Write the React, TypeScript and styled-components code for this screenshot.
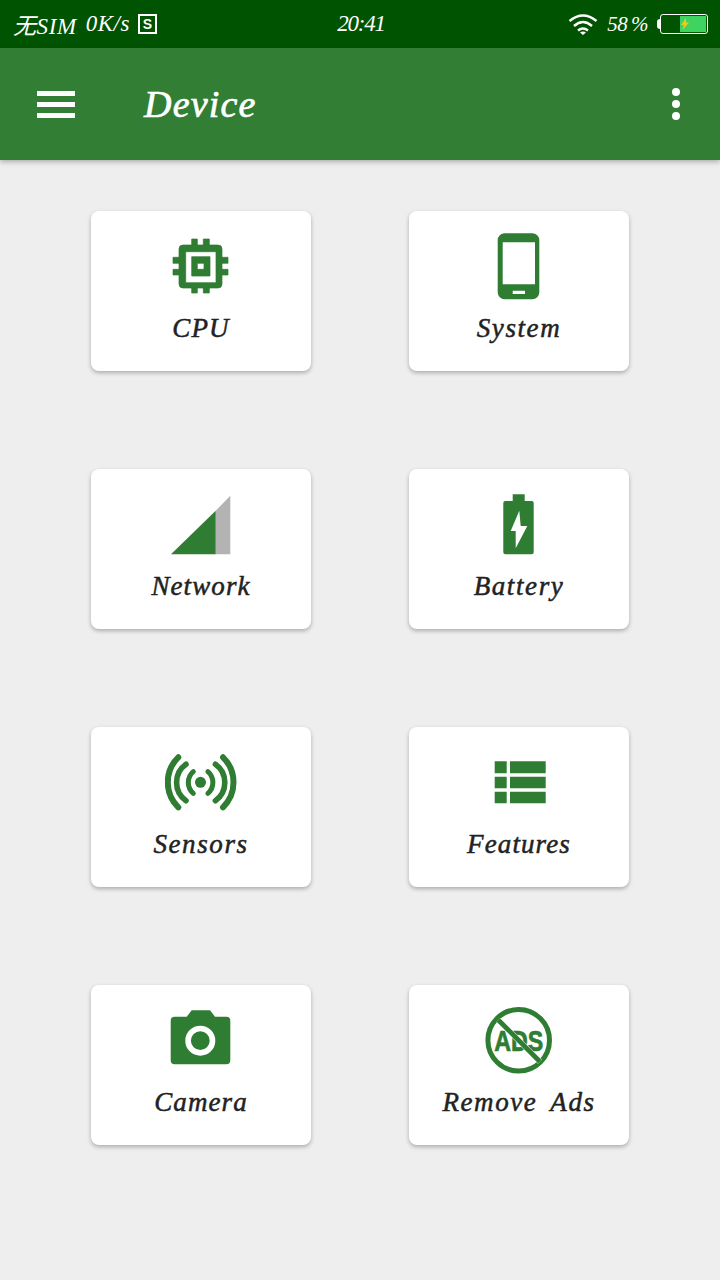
import * as React from 'react';
import styled, { createGlobalStyle } from 'styled-components';

const GREEN = '#2e7d32';
const SCRIPT = `"Liberation Serif", "Noto Sans CJK SC", serif`;

const GlobalStyle = createGlobalStyle`
  html, body {
    margin: 0;
    padding: 0;
    background: #eeeeee;
  }
`;

const Page = styled.div`
  width: 720px;
  height: 1280px;
  overflow: hidden;
  background: #eeeeee;
  font-family: ${SCRIPT};
`;

const StatusBar = styled.div`
  display: grid;
  grid-template-columns: 1fr auto 1fr;
  align-items: center;
  height: 48px;
  padding: 0 12px 0 13px;
  background: #005300;
  color: #fff;
  font-size: 23px;
  font-style: italic;
`;

const StatusLeft = styled.div`
  display: flex;
  align-items: center;
`;

const StatusRight = styled.div`
  display: flex;
  align-items: center;
  justify-content: flex-end;
`;

const Speed = styled.span`
  margin-left: 9px;
  letter-spacing: 0.5px;
`;

const Carrier = styled.span`
  letter-spacing: 0.6px;
`;

const SimBadge = styled.span`
  display: flex;
  align-items: center;
  justify-content: center;
  box-sizing: border-box;
  width: 19px;
  height: 20px;
  margin-left: 8px;
  border: 2px solid #fff;
  font: bold 14px "Liberation Sans", sans-serif;
`;

const Clock = styled.span`
  margin-left: 1px;
  letter-spacing: -1.2px;
`;

const Percent = styled.span`
  margin: 0 9px;
  font-size: 21px;
  letter-spacing: -0.5px;
  word-spacing: -1px;
`;

const BatteryCap = styled.span`
  width: 3px;
  height: 10px;
  border-radius: 3px 0 0 3px;
  background: #fff;
`;

const BatteryShell = styled.span`
  display: flex;
  justify-content: flex-end;
  box-sizing: border-box;
  width: 48px;
  height: 20px;
  padding: 1px;
  border: 1.5px solid #fff;
  border-radius: 3px;
`;

const BatteryFill = styled.span`
  display: flex;
  align-items: center;
  height: 100%;
  background: #3ed45f;
`;

const AppBar = styled.header`
  position: relative;
  display: flex;
  align-items: center;
  height: 112px;
  padding: 0 40px 0 37px;
  background: #317e34;
  box-shadow: 0 2px 5px rgba(0, 0, 0, 0.28);
`;

const MenuButton = styled.div`
  display: flex;
  flex-direction: column;
  gap: 6px;
  width: 38px;
`;

const MenuBar = styled.span`
  height: 5px;
  background: #fff;
`;

const Title = styled.h1`
  flex: 1;
  margin: 0 0 0 69px;
  color: #fff;
  font-size: 38px;
  font-style: italic;
  font-weight: 400;
  letter-spacing: 1.2px;
  -webkit-text-stroke: 0.7px #fff;
`;

const MoreButton = styled.div`
  display: flex;
  flex-direction: column;
  gap: 4px;
`;

const MoreDot = styled.span`
  width: 8px;
  height: 8px;
  border-radius: 50%;
  background: #fff;
`;

const Grid = styled.main`
  display: grid;
  grid-template-columns: 220px 220px;
  gap: 98px;
  justify-content: center;
  padding-top: 51px;
`;

const Card = styled.div`
  display: flex;
  flex-direction: column;
  align-items: center;
  height: 160px;
  padding-top: 19px;
  box-sizing: border-box;
  border-radius: 8px;
  background: #fff;
  box-shadow: 0 2px 4px rgba(0, 0, 0, 0.28);
`;

const Glyph = styled.svg.attrs({ viewBox: '0 0 72 72' })`
  display: block;
  width: 72px;
  height: 72px;
  fill: ${GREEN};
`;

const Label = styled.span<{ $wide?: boolean }>`
  margin-top: 8px;
  color: #222;
  font-size: 27px;
  font-style: italic;
  line-height: 36px;
  letter-spacing: ${p => (p.$wide ? '1.6px' : '1.1px')};
  word-spacing: 5px;
  white-space: nowrap;
  -webkit-text-stroke: 0.5px #222;
`;

const CpuIcon = () => (
  <Glyph stroke={GREEN} strokeWidth="0.7">
    <path d="M26.700 9h5.600v6h-5.600zM38.300 9h6v6h-6zM26.700 58h5.600v5h-5.600zM38.300 58h6v5h-6zM8 27.300h6v6H8zM8 39.300h6V45H8zM57 27.300h6v6h-6zM57 39.300h6V45h-6z" />
    <path
      fillRule="evenodd"
      d="M18 15h35a4 4 0 0 1 4 4v35a4 4 0 0 1-4 4H18a4 4 0 0 1-4-4V19a4 4 0 0 1 4-4zM20.700 21.700v31H51v-31zM26.700 26.700H45V46H26.700zM32.300 33.300v6H39v-6z"
    />
  </Glyph>
);

const PhoneIcon = () => (
  <Glyph>
    <path
      fillRule="evenodd"
      d="M21.700 3.300h27.600a7 7 0 0 1 7 7v52a7 7 0 0 1-7 7H21.700a7 7 0 0 1-7-7v-52a7 7 0 0 1 7-7zM19.700 12.300v42H52v-42zM29.700 60.700V64H42v-3.300z"
    />
  </Glyph>
);

const SignalIcon = () => (
  <Glyph>
    <path fill="#b3b3b3" d="M50.700 22.700 65.300 7.700v58.600H50.700z" />
    <path d="M6 66.300 50.700 22.700v43.600z" />
  </Glyph>
);

const BatteryIcon = () => (
  <Glyph>
    <path
      fillRule="evenodd"
      d="M29.700 6.300h12V13h7a2 2 0 0 1 2 2v49.300a2 2 0 0 1-2 2H22.300a2 2 0 0 1-2-2V15a2 2 0 0 1 2-2h7.400zM36.300 22.700 27.700 43h5v17.300L44.300 38h-6.600z"
    />
  </Glyph>
);

const SensorIcon = () => (
  <Glyph>
    <circle cx="35.500" cy="36.300" r="5.500" />
    <g fill="none" stroke={GREEN} strokeLinecap="round">
      <path strokeWidth="6" d="M13.300 11.300A35 35 0 0 0 13.300 61.300M58 11.300A35 35 0 0 1 58 61.300" />
      <path strokeWidth="5.600" d="M21 18.300A22.300 22.300 0 0 0 21 54.700M50.400 18.300A22.300 22.300 0 0 1 50.400 54.700" />
      <path strokeWidth="5" d="M28.300 25.700A14.200 14.200 0 0 0 28.300 47.300M42.900 25.700A14.200 14.200 0 0 1 42.900 47.300" />
    </g>
  </Glyph>
);

const TableIcon = () => (
  <Glyph>
    <path d="M11.700 15.300h12v12h-12zM27 15.300h35.700v12H27zM11.700 30.700h12v11.600h-12zM27 30.700h35.700v11.600H27zM11.700 45.700h12v11.600h-12zM27 45.700h35.700v11.600H27z" />
  </Glyph>
);

const CameraIcon = () => (
  <Glyph>
    <path d="M26.700 6.300H45l5 6.400h11.300a4 4 0 0 1 4 4v39.600a4 4 0 0 1-4 4H9.700a4 4 0 0 1-4-4V16.700a4 4 0 0 1 4-4h12z" />
    <circle cx="35.300" cy="36.700" r="12.200" fill="none" stroke="#fff" strokeWidth="5.600" />
  </Glyph>
);

const NoAdsIcon = () => (
  <Glyph>
    <text
      x="35.700"
      y="46.500"
      textAnchor="middle"
      textLength="49"
      lengthAdjust="spacingAndGlyphs"
      fontFamily="Liberation Sans, sans-serif"
      fontWeight="700"
      fontSize="29"
      stroke={GREEN}
      strokeWidth="0.7"
    >
      ADS
    </text>
    <circle cx="35.700" cy="36.300" r="30.800" fill="none" stroke={GREEN} strokeWidth="5" />
    <path d="M15.300 16 57 57.700" stroke="#fff" strokeWidth="5.600" />
    <path d="M15.300 16 57 57.700" stroke={GREEN} strokeWidth="4.800" />
  </Glyph>
);

const ITEMS: { label: string; icon: React.ReactNode; wide?: boolean }[] = [
  { label: 'CPU', icon: <CpuIcon /> },
  { label: 'System', icon: <PhoneIcon />, wide: true },
  { label: 'Network', icon: <SignalIcon /> },
  { label: 'Battery', icon: <BatteryIcon />, wide: true },
  { label: 'Sensors', icon: <SensorIcon />, wide: true },
  { label: 'Features', icon: <TableIcon /> },
  { label: 'Camera', icon: <CameraIcon /> },
  { label: 'Remove Ads', icon: <NoAdsIcon />, wide: true },
];

export default function App() {
  return (
    <Page>
      <GlobalStyle />
      <StatusBar>
        <StatusLeft>
          <Carrier>无SIM</Carrier>
          <Speed>0K/s</Speed>
          <SimBadge>S</SimBadge>
        </StatusLeft>
        <Clock>20:41</Clock>
        <StatusRight>
          <svg width="30" height="22" viewBox="0 0 30 22" fill="none" stroke="#fff" strokeWidth="2.400">
            <path d="M1.500 8Q15-3 28.500 8M6 13Q15 5 24 13M10 17.500Q15 13.500 20 17.500" />
            <path d="M12 19.500Q15 17.500 18 19.500L15 22Z" fill="#fff" stroke="none" />
          </svg>
          <Percent>58 %</Percent>
          <BatteryCap />
          <BatteryShell>
            <BatteryFill>
              <svg width="26" height="14" viewBox="0 0 26 14">
                <path d="M6 1 1 8h3L2.500 13 9 5.500H6z" fill="#f2c81c" />
              </svg>
            </BatteryFill>
          </BatteryShell>
        </StatusRight>
      </StatusBar>
      <AppBar>
        <MenuButton>
          <MenuBar />
          <MenuBar />
          <MenuBar />
        </MenuButton>
        <Title>Device</Title>
        <MoreButton>
          <MoreDot />
          <MoreDot />
          <MoreDot />
        </MoreButton>
      </AppBar>
      <Grid>
        {ITEMS.map(item => (
          <Card key={item.label}>
            {item.icon}
            <Label $wide={item.wide}>{item.label}</Label>
          </Card>
        ))}
      </Grid>
    </Page>
  );
}
